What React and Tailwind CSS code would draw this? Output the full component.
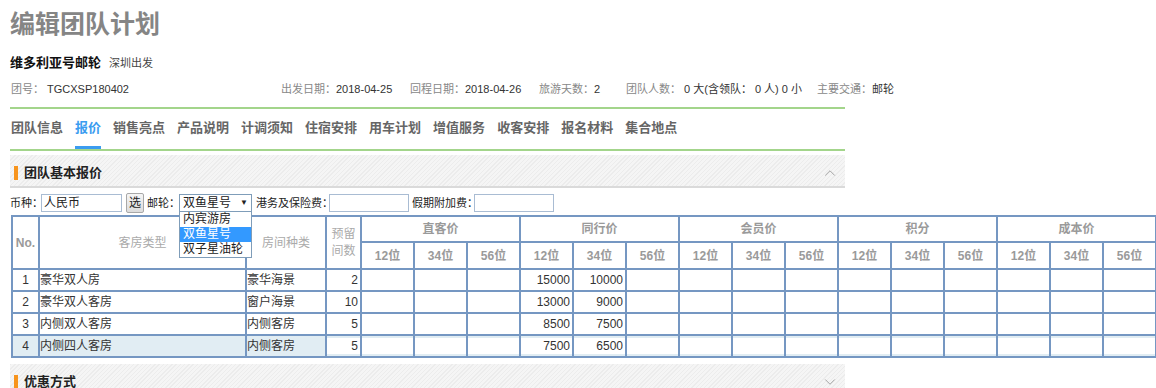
import { ChevronUp, ChevronDown } from 'lucide-react'

const FONT = { fontFamily: '"Liberation Sans", "Noto Sans CJK SC", sans-serif' }

const TABS = ['团队信息', '报价', '销售亮点', '产品说明', '计调须知', '住宿安排', '用车计划', '增值服务', '收客安排', '报名材料', '集合地点']
const GROUPS = ['直客价', '同行价', '会员价', '积分', '成本价']
const SUBS = ['12位', '34位', '56位']

const ROWS = [
  { no: 1, type: '豪华双人房', kind: '豪华海景', left: 2, p: ['', '', '', '15000', '10000'] },
  { no: 2, type: '豪华双人客房', kind: '窗户海景', left: 10, p: ['', '', '', '13000', '9000'] },
  { no: 3, type: '内侧双人客房', kind: '内侧客房', left: 5, p: ['', '', '', '8500', '7500'] },
  { no: 4, type: '内侧四人客房', kind: '内侧客房', left: 5, p: ['', '', '', '7500', '6500'], hl: true },
]

function SectionHeader({ title, open }) {
  return (
    <div className="w-[835px] h-[33px] box-border pt-[4px] flex items-center justify-between border-b-2 border-[#dadada] bg-[repeating-linear-gradient(-45deg,#f5f5f5_0px,#f5f5f5_2px,#ececec_2px,#ececec_3px)]">
      <div className="flex items-center">
        <span className="ml-[4px] w-[4px] h-[14px] bg-[#f7941d]" />
        <span className="ml-[6px] text-[13px] font-bold text-[#222]">{title}</span>
      </div>
      {open
        ? <ChevronUp size={18} strokeWidth={1} className="mr-[6px] text-[#888]" />
        : <ChevronDown size={18} strokeWidth={1} className="mr-[6px] text-[#888]" />}
    </div>
  )
}

function Input({ w }) {
  return <div className={`${w} shrink-0 h-[18px] border border-[#a9bcd3] bg-white`} />
}

export default function App() {
  return (
    <div className="relative px-[10px] bg-white text-[#333] overflow-hidden h-[388px]" style={FONT}>
      <h1 className="pt-[8px] text-[25px] leading-[32px] font-bold text-[#858585]">编辑团队计划</h1>

      <div className="mt-[15px] h-[16px] flex items-center">
        <span className="text-[13px] font-bold text-[#111]">维多利亚号邮轮</span>
        <span className="ml-[8px] text-[11px] text-[#444]">深圳出发</span>
      </div>

      <div className="mt-[10px] h-[16px] flex items-center text-[11px] w-[900px] whitespace-nowrap">
        <div className="w-[271px] pl-[1px]"><span className="text-[#888]">团号：</span> TGCXSP180402</div>
        <div className="w-[129px]"><span className="text-[#888]">出发日期：</span>2018-04-25</div>
        <div className="w-[129px]"><span className="text-[#888]">回程日期：</span>2018-04-26</div>
        <div className="w-[87px]"><span className="text-[#888]">旅游天数：</span>2</div>
        <div className="w-[191px]"><span className="text-[#888]">团队人数：</span> 0 大(含领队： 0 人) 0 小</div>
        <div><span className="text-[#888]">主要交通：</span>邮轮</div>
      </div>

      <div className="mt-[10px] w-[835px] h-[2px] bg-[#a3d58b]" />

      <div className="flex pl-[1px]">
        {TABS.map(t => (
          <div
            key={t}
            className={`mr-[12px] pt-[10px] pb-[9px] leading-[18px] text-[13px] font-bold border-b-[3px] ${t === '报价' ? 'text-[#3b9cf0] border-[#3b9cf0]' : 'text-[#666] border-transparent'}`}
          >
            {t}
          </div>
        ))}
      </div>
      <div className="w-[835px] h-[2px] bg-[#a3d58b]" />

      <div className="mt-[4px]">
        <SectionHeader title="团队基本报价" open />
      </div>

      <div className="mt-[5px] h-[20px] flex items-center text-[11px] text-[#222] whitespace-nowrap">
        <span className="w-[31px] shrink-0">币种：</span>
        <div className="w-[81px] shrink-0 h-[18px] border border-[#a9bcd3] bg-white text-[12px] leading-[16px] pl-[2px]">人民币</div>
        <div className="ml-[4px] shrink-0 w-[18px] h-[20px] border border-[#a8a8a8] rounded-[2px] bg-[linear-gradient(#f6f6f6,#dcdcdc)] text-[12px] leading-[18px] text-center">选</div>
        <span className="ml-[3px] w-[32px] shrink-0">邮轮：</span>
        <div className="relative shrink-0 w-[73px] h-[18px] border border-[#7f9db9] bg-white flex items-center justify-between px-[3px] text-[12px]">
          <span>双鱼星号</span>
          <span className="text-[8px]">▼</span>
          <div className="absolute z-10 left-[-1px] top-[16px] w-[73px] border border-[#7f9db9] bg-white text-[12px] leading-[15px]">
            <div className="px-[3px]">内宾游房</div>
            <div className="px-[3px] bg-[#3399ff] text-white">双鱼星号</div>
            <div className="px-[3px]">双子星油轮</div>
          </div>
        </div>
        <span className="ml-[4px] w-[73px] shrink-0">港务及保险费：</span>
        <Input w="w-[80px]" />
        <span className="ml-[3px] w-[62px] shrink-0">假期附加费：</span>
        <Input w="w-[80px]" />
      </div>

      <table className="mt-[2px] ml-[1px] table-fixed border-collapse w-[1145px] text-[12px]">
        <colgroup>
          <col className="w-[27px]" />
          <col className="w-[207px]" />
          <col className="w-[80px]" />
          <col className="w-[35px]" />
          {Array.from({ length: 15 }).map((_, i) => <col key={i} className="w-[53px]" />)}
        </colgroup>
        <thead className="text-[#9a9a9a]">
          <tr className="h-[26px]">
            <th rowSpan={2} className="border-2 border-[#7597c2] font-bold">No.</th>
            <th rowSpan={2} className="border-2 border-[#7597c2] font-normal text-[#aaa]">客房类型</th>
            <th rowSpan={2} className="border-2 border-[#7597c2] font-normal text-[#aaa]">房间种类</th>
            <th rowSpan={2} className="border-2 border-[#7597c2] font-normal text-[#aaa] leading-[17px]">预留<br />间数</th>
            {GROUPS.map(g => (
              <th key={g} colSpan={3} className="border-2 border-[#7597c2] font-bold">{g}</th>
            ))}
          </tr>
          <tr className="h-[27px]">
            {GROUPS.flatMap(g => SUBS.map(s => (
              <th key={g + s} className="border-2 border-[#7597c2] font-bold">{s}</th>
            )))}
          </tr>
        </thead>
        <tbody>
          {ROWS.map(r => (
            <tr key={r.no} className={`h-[21px] ${r.hl ? 'bg-[#e1edf3]' : 'bg-white'}`}>
              <td className="border-2 border-[#7597c2] text-center text-[#333] p-0">{r.no}</td>
              <td className="border-2 border-[#7597c2] p-0 text-[#333]">{r.type}</td>
              <td className="border-2 border-[#7597c2] p-0 text-[#333]">{r.kind}</td>
              <td className="border-2 border-[#7597c2] px-0 py-[2px]">
                <div className="h-[16px] bg-white text-right pr-[2px] leading-[16px]">{r.left}</div>
              </td>
              {Array.from({ length: 15 }).map((_, i) => (
                <td key={i} className="border-2 border-[#7597c2] px-0 py-[2px]">
                  <div className="h-[16px] bg-white text-right pr-[2px] leading-[16px] text-[#333]">{r.p[i] || ''}</div>
                </td>
              ))}
            </tr>
          ))}
        </tbody>
      </table>

      <div className="mt-[6px]">
        <SectionHeader title="优惠方式" />
      </div>
    </div>
  )
}
